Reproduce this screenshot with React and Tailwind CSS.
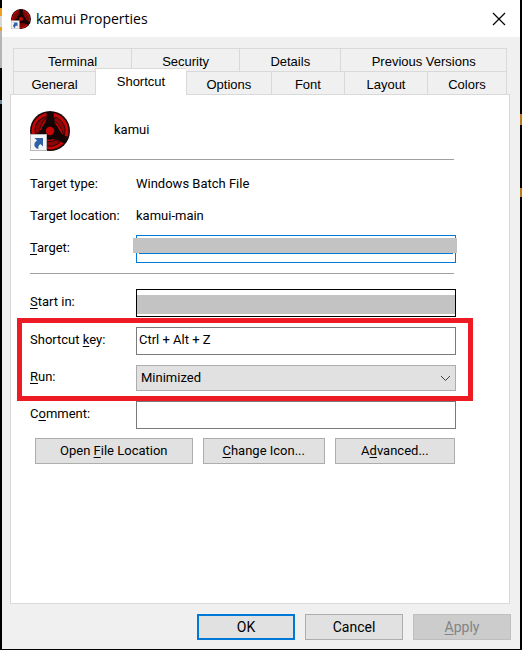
import React from "react";

function KamuiIcon({ className }) {
  return (
    <svg viewBox="0 0 40 40" className={className} aria-hidden="true">
      <circle cx="20" cy="20" r="20" fill="#1c0808" />
      <circle cx="20" cy="20" r="18.5" fill="#c40606" />
      {[0, 120, 240].map((a) => (
        <g key={a} transform={`rotate(${a} 20 20)`}>
          <path d="M16 1 C18 6 16 11 12 16 L14 24 L26 24 L28 18 C25 13 23 7 24 1Z" fill="#150505" />
          <path d="M25 6 C31 8 35 13 35 20 C35 22 34.500 24 34 25 C32 18 29 13 24 10Z" fill="#8c0606" stroke="#330606" strokeWidth="1" />
        </g>
      ))}
      <circle cx="20" cy="20" r="7" fill="#150505" />
      <circle cx="20" cy="20" r="4.2" fill="#c40606" />
      <rect x="0.5" y="23.500" width="16" height="16" fill="#f5f5f5" stroke="#b8b8b8" />
      <path d="M4.500 27 H13 V35.500 L10.500 33 C8.500 34 8 36 8.500 38 C3.500 37 3 32 7 29.500Z" fill="#2f62a5" />
    </svg>
  );
}

function U({ children }) {
  return <span className="underline decoration-1 underline-offset-2">{children}</span>;
}

function Tab({ className, active, children }) {
  return (
    <button
      role="tab"
      type="button"
      aria-selected={!!active}
      className={`border-t border-l border-[#d9d9d9] text-center whitespace-nowrap ${
        active ? "-mt-[3px] -mb-px bg-white" : "bg-[#f0f0f0] pt-1"
      } ${className}`}
    >
      {children}
    </button>
  );
}

function Row({ id, label, children }) {
  return (
    <div className="flex items-center">
      <label htmlFor={id} className="w-[106px] shrink-0 pb-[2px] whitespace-nowrap">
        {label}
      </label>
      <div className="relative flex min-w-0 flex-1">{children}</div>
    </div>
  );
}

const field = "h-7 w-full min-w-0 border bg-white px-[2px] pb-1 outline-none";
const button = "h-[26px] border border-[#adadad] bg-[#e1e1e1] text-center whitespace-nowrap";

export default function App() {
  return (
    <div className="flex min-h-screen bg-black">
      <div className="w-[2px] shrink-0">
        <div className="mt-2 h-2 bg-[#f0a020]" />
        <div className="h-[11px] bg-[#d8d8d8]" />
        <div className="h-1 bg-[#f0a020]" />
        <div className="h-[37px] bg-[#b4b4b4]" />
        <div className="mt-8 h-1 bg-[#6d8a99]" />
      </div>

      <main className="mb-px flex min-w-0 flex-1 flex-col bg-[#f0f0f0] font-['Roboto','Liberation_Sans',sans-serif] text-[13px] leading-4 text-black">
        <header className="flex h-[37px] items-center bg-white pr-[14px] pl-[9px]">
          <KamuiIcon className="size-5" />
          <h1 className="ml-[5px] flex-1 font-['Open_Sans','Noto_Sans',sans-serif] text-[14px]">kamui Properties</h1>
          <button type="button" aria-label="Close">
            <svg width="14" height="14" viewBox="0 0 14 14" stroke="black" strokeWidth="1.200">
              <path d="M1 1 L13 13 M13 1 L1 13" />
            </svg>
          </button>
        </header>

        <div role="tablist" className="mt-[11px] mr-[13px] ml-[11px] font-['Liberation_Sans',sans-serif]">
          <div className="flex h-[23px] border-r border-[#d9d9d9]">
            <Tab className="flex-[118]">Terminal</Tab>
            <Tab className="flex-[108]">Security</Tab>
            <Tab className="flex-[101]">Details</Tab>
            <Tab className="flex-[166]">Previous Versions</Tab>
          </div>
          <div className="flex h-[23px] border-r border-[#d9d9d9]">
            <Tab className="flex-[82]">General</Tab>
            <Tab className="relative flex-[91]" active>Shortcut</Tab>
            <Tab className="flex-[85]">Options</Tab>
            <Tab className="flex-[73]">Font</Tab>
            <Tab className="flex-[83]">Layout</Tab>
            <Tab className="flex-[79]">Colors</Tab>
          </div>
        </div>

        <section className="mr-[10px] ml-2 flex-1 border border-[#d9d9d9] bg-white pt-4 pr-[53px] pl-[19px]">
          <div className="flex items-center">
            <KamuiIcon className="size-10" />
            <span className="ml-11 pb-[3px]">kamui</span>
          </div>
          <hr className="mt-2 mr-[2px] border-[#a0a0a0]" />

          <dl className="mt-4 grid grid-cols-[106px_1fr] gap-y-4">
            <dt className="whitespace-nowrap">Target type:</dt>
            <dd>Windows Batch File</dd>
            <dt className="whitespace-nowrap">Target location:</dt>
            <dd>kamui-main</dd>
          </dl>

          <div className="mt-[11px]">
            <Row id="target" label={<><U>T</U>arget:</>}>
              <input id="target" className={`${field} border-[#0078d7]`} />
              <div className="absolute top-[3px] -right-px -left-[3px] h-[15px] bg-[#c3c3c3]" />
              <div className="absolute top-[18px] right-[3px] left-[3px] h-px bg-[#0078d7]" />
            </Row>
          </div>
          <hr className="mt-[10px] mr-[2px] border-[#a0a0a0]" />

          <div className="mt-[15px] flex flex-col gap-[10px]">
            <Row id="start" label={<><U>S</U>tart in:</>}>
              <input id="start" className={`${field} border-black`} />
              <div className="absolute inset-x-px top-[6px] h-[19px] bg-[#c3c3c3]" />
            </Row>
            <div className="relative flex flex-col gap-[10px]">
              <Row id="key" label={<>Shortcut <U>k</U>ey:</>}>
                <input id="key" defaultValue="Ctrl + Alt + Z" className={`${field} border-[#7a7a7a]`} />
              </Row>
              <Row id="run" label={<><U>R</U>un:</>}>
                <select id="run" className="h-[26px] w-full appearance-none border border-[#adadad] bg-[#e1e1e1] px-1">
                  <option>Minimized</option>
                </select>
                <svg className="pointer-events-none absolute top-[10px] right-[5px]" width="11" height="7" viewBox="0 0 11 7" fill="none" stroke="#404040">
                  <path d="M1 1 L5.500 5.500 L10 1" />
                </svg>
              </Row>
              <div className="pointer-events-none absolute -top-[9px] -right-[17px] -bottom-[10px] -left-[13px] z-10 border-5 border-[#ed1c24]" />
            </div>
            <Row id="comment" label={<>C<U>o</U>mment:</>}>
              <input id="comment" className={`${field} border-[#7a7a7a]`} />
            </Row>
          </div>

          <div className="mt-[9px] mr-px ml-[5px] flex gap-[10px]">
            <button type="button" className={`${button} flex-[158]`}>Open <U>F</U>ile Location</button>
            <button type="button" className={`${button} flex-[122]`}><U>C</U>hange Icon...</button>
            <button type="button" className={`${button} flex-[120]`}>A<U>d</U>vanced...</button>
          </div>
        </section>

        <footer className="flex justify-end gap-[10px] pt-[10px] pr-[9px] pb-[9px] text-[14px]">
          <button type="button" className="h-[26px] w-[98px] border-2 border-[#0078d7] bg-[#e1e1e1]">OK</button>
          <button type="button" className={`${button} w-[98px]`}>Cancel</button>
          <button type="button" disabled className="h-[26px] w-[98px] border border-[#bfbfbf] bg-[#cccccc] text-[#838383]"><U>A</U>pply</button>
        </footer>
      </main>

      <div className="w-[2px] shrink-0">
        <div className="mt-[114px] h-[11px] bg-[#b87a20]" />
        <div className="mt-[63px] h-[9px] bg-[#b87a20]" />
      </div>
    </div>
  );
}
